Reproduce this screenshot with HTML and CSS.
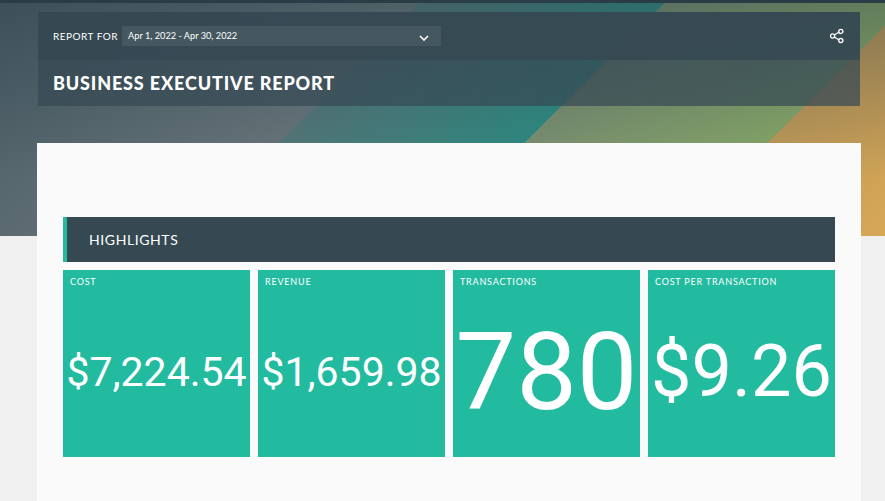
FILE: index.html
```html
<!DOCTYPE html>
<html lang="en">
<head>
    <meta charset="UTF-8">
    <meta name="viewport" content="width=device-width, initial-scale=1.0">
    <title>Business Executive Report</title>
    <link rel="stylesheet" href="styles.css">
</head>
<body>
    <div class="top-strip"></div>

    <div class="hero">
        <div class="report-header">
            <div class="report-bar">
                <span class="report-for">Report for</span>
                <div class="date-select">
                    <span>Apr 1, 2022 - Apr 30, 2022</span>
                    <svg class="chevron" width="10" height="6" viewBox="0 0 10 6">
                        <path d="M1 1l4 4 4-4" fill="none" stroke="#fff" stroke-width="1.6"/>
                    </svg>
                </div>
                <svg class="share" width="16" height="16" viewBox="0 0 16 16">
                    <path d="M5.2 7l5-2.9M5.2 9l5 2.9" fill="none" stroke="#fff" stroke-width="1.2"/>
                    <circle cx="3.6" cy="8" r="2.1" fill="none" stroke="#fff" stroke-width="1.3"/>
                    <circle cx="11.8" cy="3.4" r="2.1" fill="none" stroke="#fff" stroke-width="1.3"/>
                    <circle cx="11.8" cy="12.6" r="2.1" fill="none" stroke="#fff" stroke-width="1.3"/>
                </svg>
            </div>
            <h1>Business Executive Report</h1>
        </div>
    </div>

    <div class="report-card">
        <h2 class="section-head">Highlights</h2>
        <div class="tiles">
            <div class="tile">
                <div class="tile-label">Cost</div>
                <div class="tile-value value-long">$7,224.54</div>
            </div>
            <div class="tile">
                <div class="tile-label">Revenue</div>
                <div class="tile-value value-long">$1,659.98</div>
            </div>
            <div class="tile">
                <div class="tile-label">Transactions</div>
                <div class="tile-value value-huge">780</div>
            </div>
            <div class="tile">
                <div class="tile-label">Cost per transaction</div>
                <div class="tile-value value-mid">$9.26</div>
            </div>
        </div>
    </div>
</body>
</html>
```

FILE: styles.css
```css
* {
    box-sizing: border-box;
    margin: 0;
    padding: 0;
}

html, body {
    height: 100vh;
    overflow: hidden;
}

body {
    background-color: #f0f0f0;
    font-family: 'Lato', 'Open Sans', sans-serif;
    color: #fff;
}

.top-strip {
    height: 3px;
    background-color: #2a3c45;
}

.hero {
    height: 233px;
    padding: 9px 25px 0 38px;
    background:
        linear-gradient(to bottom, rgba(40, 60, 70, 0.38), rgba(40, 60, 70, 0) 75%),
        linear-gradient(135deg,
            #4a5c64 0, #68767b 296px,
            #55787a 296px, #2f8d83 470px,
            #7d9272 470px, #87a868 642px,
            #c09a58 642px, #d8a855 800px);
}

.report-header {
    background-color: rgba(54, 73, 84, 0.72);
}

.report-bar {
    display: flex;
    align-items: center;
    height: 48px;
    padding: 0 15px 0 15px;
    background-color: rgba(54, 73, 83, 0.9);
}

.report-for {
    font-size: 10px;
    letter-spacing: 0.5px;
    text-transform: uppercase;
    margin-right: 4px;
    margin-top: -1px;
}

.date-select {
    display: flex;
    align-items: center;
    justify-content: space-between;
    width: 319px;
    height: 20px;
    padding: 0 12px 0 6px;
    font-size: 9.2px;
    line-height: 18px;
    background-color: #46585f;
}

.date-select span {
    margin-top: -1px;
}

.chevron {
    margin-top: 3px;
}

.share {
    margin-left: auto;
}

h1 {
    font-size: 18px;
    font-weight: 900;
    letter-spacing: 0.85px;
    line-height: 46px;
    padding-left: 15px;
    text-transform: uppercase;
}

.report-card {
    width: 824px;
    height: 358px;
    margin: -93px 0 0 37px;
    padding: 74px 26px 0;
    background-color: #fafafa;
    position: relative;
}

.section-head {
    height: 45px;
    line-height: 46px;
    padding-left: 22px;
    border-left: 4px solid #23bb9f;
    background-color: #364953;
    font-size: 14px;
    font-weight: 400;
    letter-spacing: 0.6px;
    text-transform: uppercase;
}

.tiles {
    display: grid;
    grid-template-columns: repeat(4, 1fr);
    gap: 8px;
    margin-top: 8px;
}

.tile {
    display: flex;
    flex-direction: column;
    height: 187px;
    background-color: #23bb9f;
}

.tile-label {
    padding: 7px 7px 0;
    height: 17px;
    font-size: 9px;
    line-height: 10px;
    letter-spacing: 0.8px;
    text-transform: uppercase;
}

.tile-value {
    flex: 1;
    display: flex;
    align-items: center;
    justify-content: center;
    white-space: nowrap;
    line-height: 1;
    font-family: 'Roboto', 'Lato', sans-serif;
}

.value-long {
    font-size: 41px;
}

.value-mid {
    font-size: 72px;
}

.value-huge {
    font-size: 108px;
}
```
